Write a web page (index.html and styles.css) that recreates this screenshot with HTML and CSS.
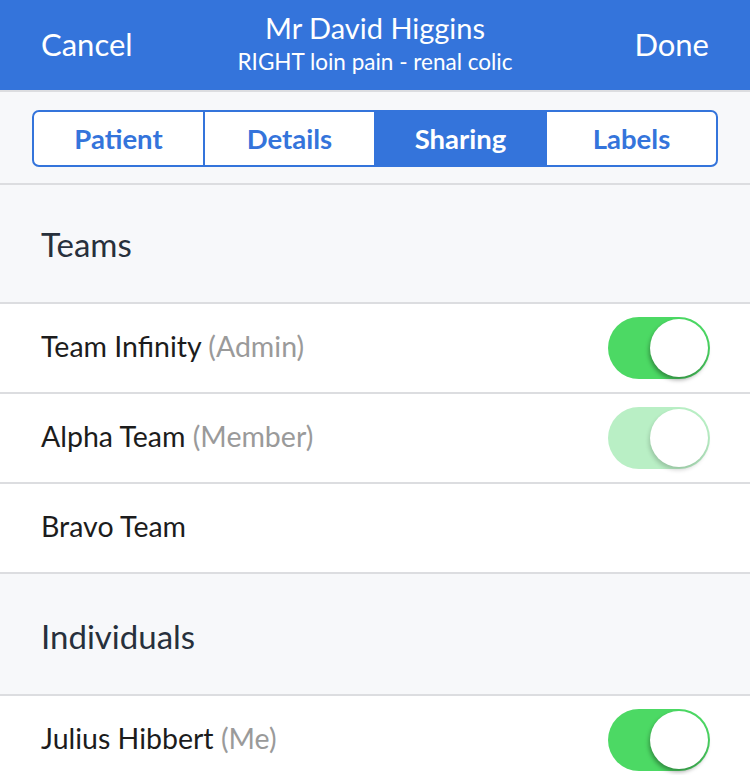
FILE: index.html
```html
<!DOCTYPE html>
<html>
<head>
<meta charset="utf-8">
<link rel="stylesheet" href="styles.css">
</head>
<body>
<header class="nav">
  <div class="nav-btn">Cancel</div>
  <div class="nav-title">
    <div class="title">Mr David Higgins</div>
    <div class="subtitle">RIGHT loin pain - renal colic</div>
  </div>
  <div class="nav-btn right">Done</div>
</header>
<div class="seg-wrap">
  <div class="seg">
    <div class="seg-item">Patient</div>
    <div class="seg-item">Details</div>
    <div class="seg-item active">Sharing</div>
    <div class="seg-item">Labels</div>
  </div>
</div>
<div class="section">Teams</div>
<div class="row">
  <div class="label">Team Infinity <span class="role">(Admin)</span></div>
  <div class="toggle on"><div class="knob"></div></div>
</div>
<div class="row">
  <div class="label">Alpha Team <span class="role">(Member)</span></div>
  <div class="toggle on disabled"><div class="knob"></div></div>
</div>
<div class="row">
  <div class="label">Bravo Team</div>
</div>
<div class="section tall">Individuals</div>
<div class="row">
  <div class="label">Julius Hibbert <span class="role">(Me)</span></div>
  <div class="toggle on"><div class="knob"></div></div>
</div>
</body>
</html>
```
FILE: styles.css
```css
* { box-sizing: border-box; }
html, body { margin: 0; padding: 0; }
body {
  width: 750px;
  height: 775px;
  overflow: hidden;
  background: #fff;
  font-family: Lato, "Open Sans", sans-serif;
  color: #1c1c1c;
}
.nav {
  height: 92px;
  background: #3474db;
  border-bottom: 2px solid #dcdde0;
  display: flex;
  align-items: center;
  justify-content: space-between;
  padding: 0 41px 2px 41px;
  color: #fff;
}
.nav-btn { font-size: 31px; width: 140px; }
.nav-btn.right { text-align: right; }
.nav-title { text-align: center; }
.title { font-size: 29px; line-height: 32px; }
.subtitle { font-size: 22.5px; line-height: 28px; margin-top: 4px; }
.seg-wrap {
  background: #f7f8fa;
  padding: 18px 32px 16px;
  border-bottom: 2px solid #dcdde0;
  height: 93px;
}
.seg {
  display: flex;
  height: 57px;
  border: 2px solid #3474db;
  border-radius: 7px;
  overflow: hidden;
  background: #fff;
}
.seg-item {
  flex: 1;
  display: flex;
  align-items: center;
  justify-content: center;
  font-size: 27.5px;
  font-weight: 700;
  color: #3474db;
  border-left: 2px solid #3474db;
}
.seg-item:first-child { border-left: none; }
.seg-item.active { background: #3474db; color: #fff; }
.section {
  background: #f7f8fa;
  height: 119px;
  border-bottom: 2px solid #dcdde0;
  padding: 0 41px 0 41px;
  display: flex;
  align-items: center;
  font-size: 33px;
  color: #27303c;
}
.section.tall { height: 122px; padding-top: 4px; }
.row {
  height: 90px;
  border-bottom: 2px solid #dcdde0;
  display: flex;
  align-items: center;
  justify-content: space-between;
  padding: 0 40px 0 41px;
  font-size: 28.5px;
}
.label { padding-bottom: 4px; }
.role { color: #9a9a9a; }
.toggle {
  width: 102px;
  height: 62px;
  border-radius: 31px;
  background: #4cd964;
  position: relative;
}
.toggle.disabled { background: #b9efc5; }
.knob {
  position: absolute;
  right: 2px;
  top: 2px;
  width: 58px;
  height: 58px;
  border-radius: 50%;
  background: #fff;
  box-shadow: -1px 3px 4px rgba(0,0,0,0.35);
}
.toggle.disabled .knob { box-shadow: -1px 3px 4px rgba(0,0,0,0.18); }
```
